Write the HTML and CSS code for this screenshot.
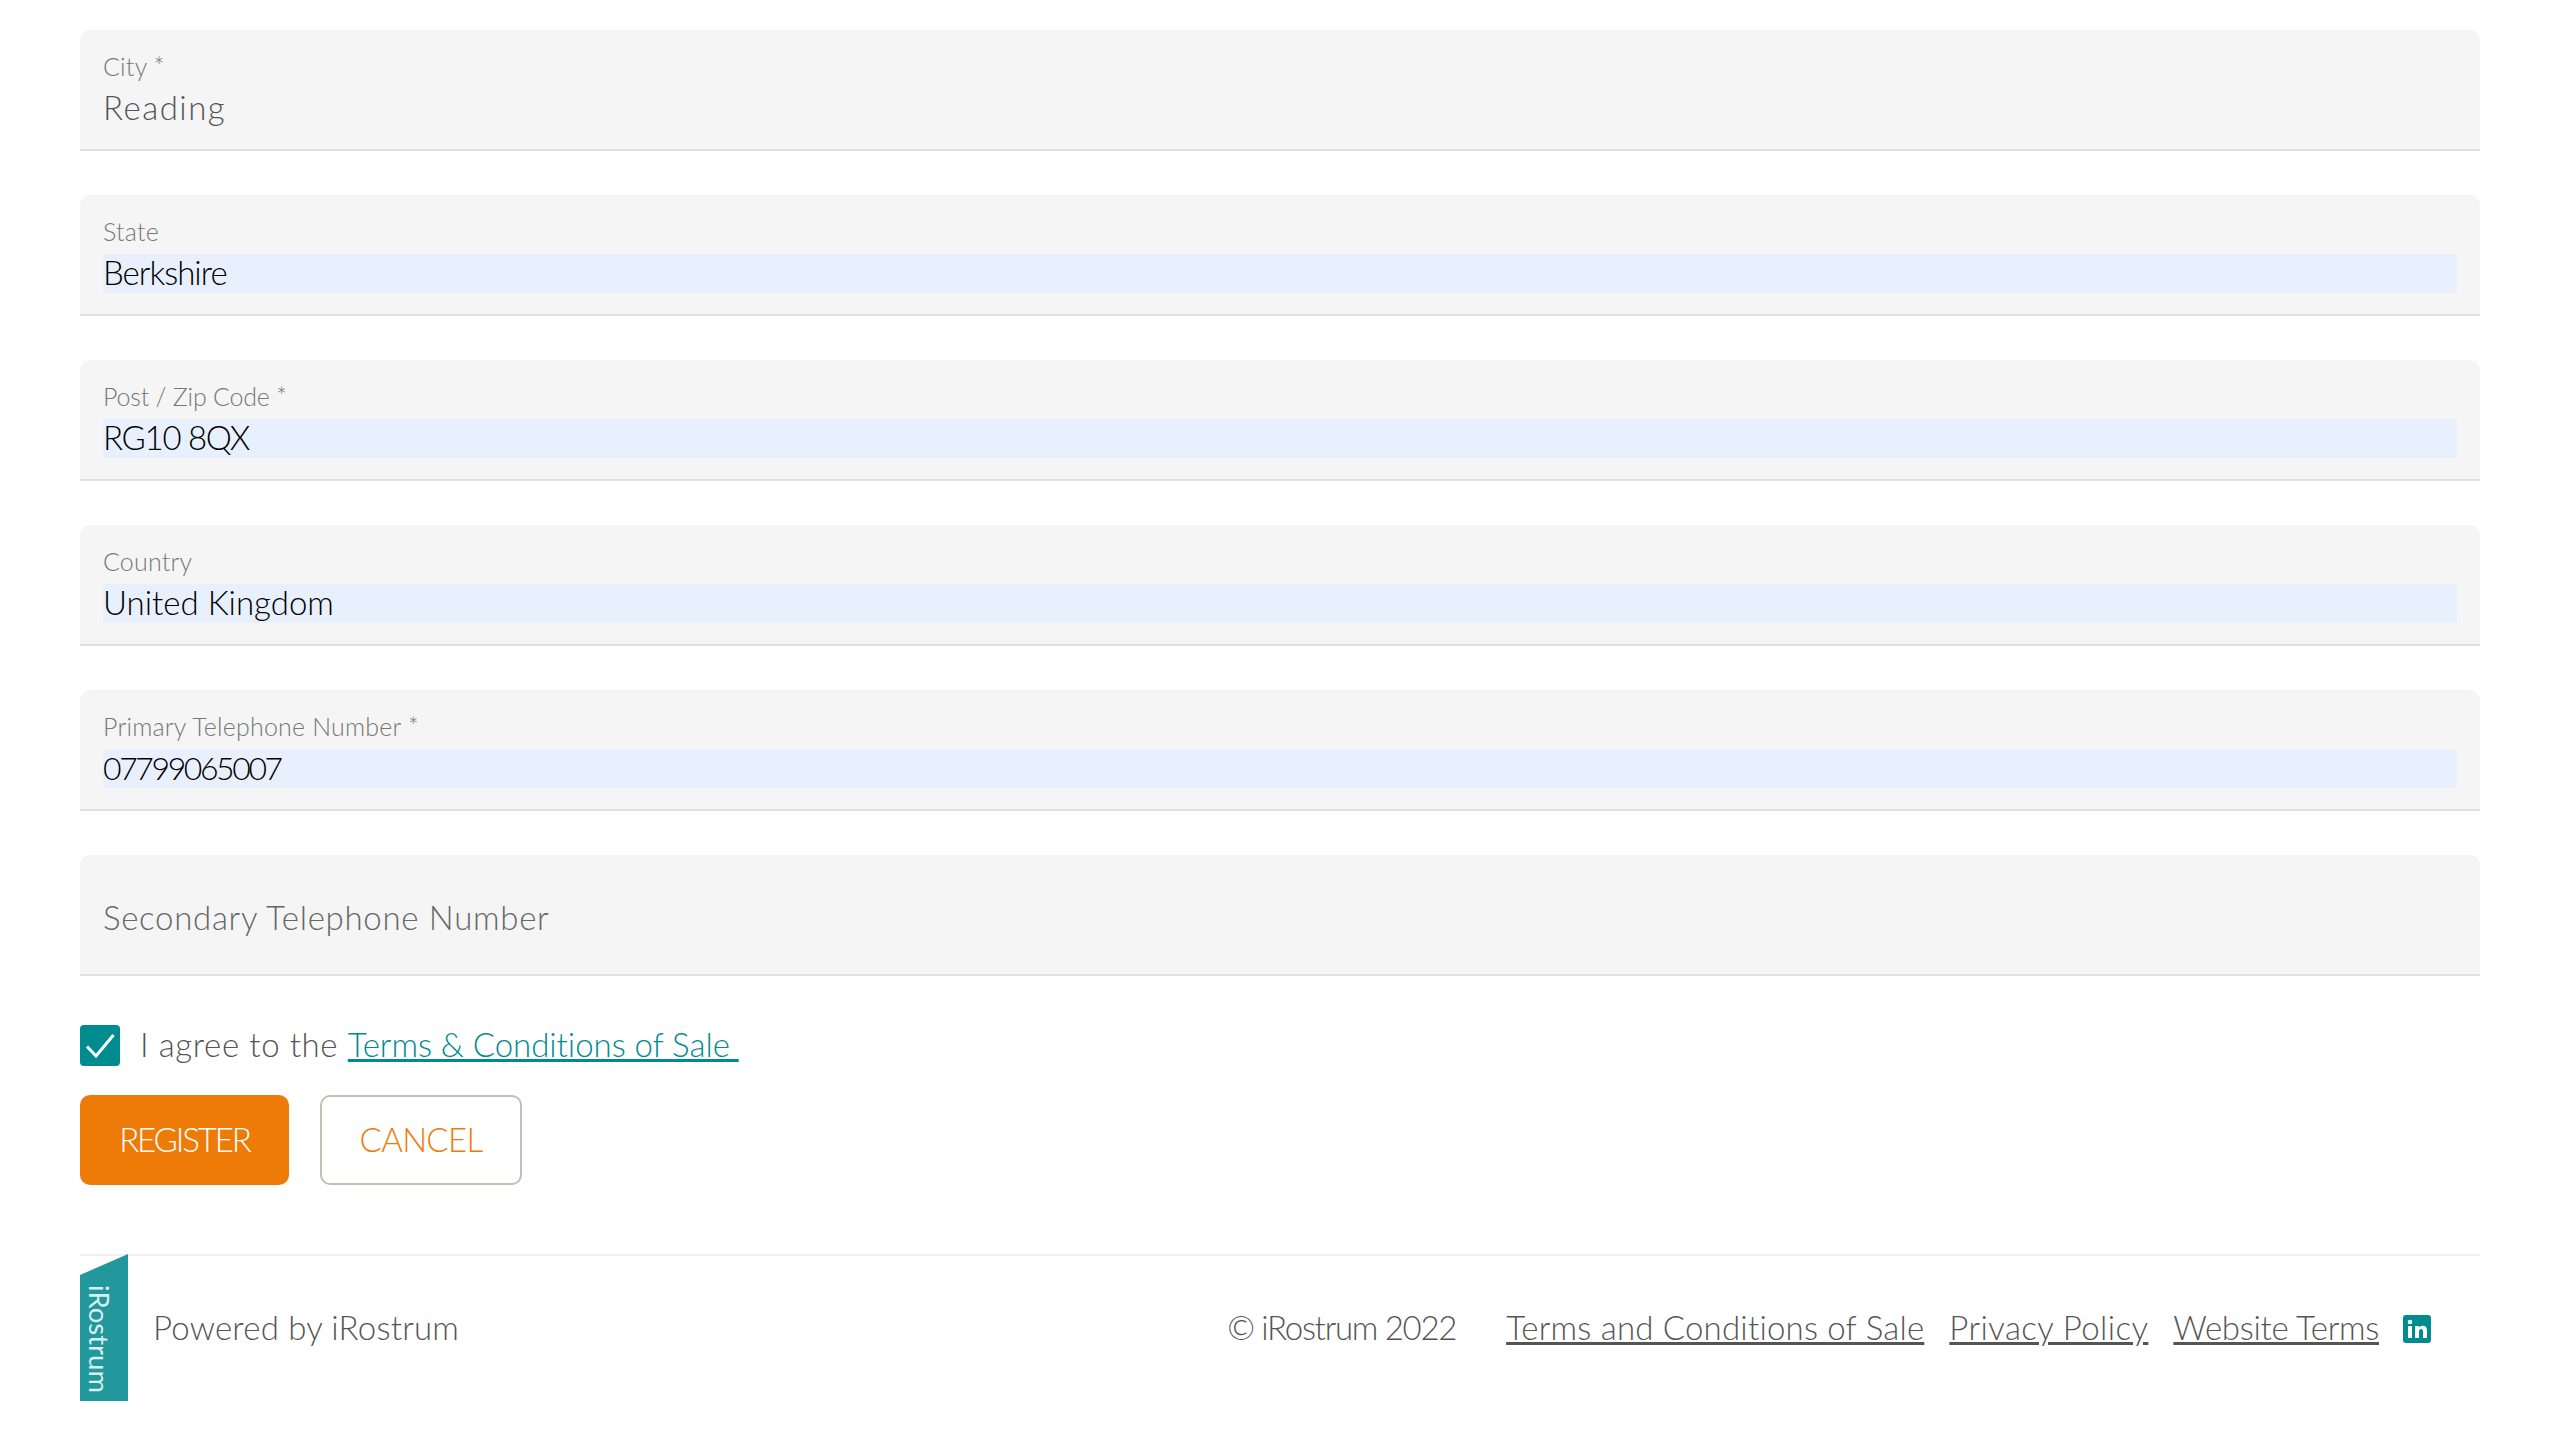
FILE: index.html
```html
<!DOCTYPE html>
<html lang="en">
<head>
<meta charset="utf-8">
<title>Register</title>
<link rel="stylesheet" href="styles.css">
</head>
<body>
<main class="page">
  <form class="form">
    <div class="field"><div class="label">City *</div><div class="value">Reading</div></div>
    <div class="field"><div class="label">State</div><div class="value filled">Berkshire</div></div>
    <div class="field"><div class="label zip">Post / Zip Code *</div><div class="value filled code">RG10 8QX</div></div>
    <div class="field"><div class="label">Country</div><div class="value filled country">United Kingdom</div></div>
    <div class="field"><div class="label">Primary Telephone Number *</div><div class="value filled phone">07799065007</div></div>
    <div class="field empty"><div class="placeholder">Secondary Telephone Number</div></div>
    <div class="agree">
      <span class="check"><svg viewBox="0 0 40 40" width="40" height="40"><path d="M7 21.5 L16 31 L33.5 10" fill="none" stroke="#fff" stroke-width="3"/></svg></span>
      <span class="agree-text">I agree to the <a class="terms" href="#">Terms &amp; Conditions of Sale&nbsp;</a></span>
    </div>
    <div class="actions">
      <button type="button" class="btn primary">REGISTER</button>
      <button type="button" class="btn secondary">CANCEL</button>
    </div>
  </form>
  <footer class="footer">
    <div class="brand">
      <svg class="logo" viewBox="0 0 48 147" width="48" height="147">
        <polygon points="0,21 48,0 48,147 0,147" fill="#23989c"/>
        <text class="logo-text" transform="translate(9,31) rotate(90)" textLength="108" lengthAdjust="spacingAndGlyphs">iRostrum</text>
      </svg>
      <span class="powered">Powered by iRostrum</span>
    </div>
    <div class="meta">
      <span class="copy">© iRostrum 2022</span>
      <a class="link first" href="#">Terms and Conditions of Sale</a>
      <a class="link privacy" href="#">Privacy Policy</a>
      <a class="link website" href="#">Website Terms</a>
      <svg class="linkedin" viewBox="0 0 28 28" width="28" height="28">
        <rect width="28" height="28" rx="3" fill="#008b8f"/>
        <rect x="5" y="11" width="4" height="12" fill="#fff"/>
        <circle cx="7" cy="7" r="2.3" fill="#fff"/>
        <path d="M12 11h3.8v1.8c.7-1.2 2-2.1 3.8-2.1 3.3 0 4.4 2 4.4 5.2V23h-4v-6.2c0-1.5-.4-2.7-1.9-2.7s-2.1 1.2-2.1 2.7V23h-4z" fill="#fff"/>
      </svg>
    </div>
  </footer>
</main>
</body>
</html>
```
FILE: styles.css
```css
* { box-sizing: border-box; }
html, body { margin: 0; padding: 0; background: #fff; }
body { font-family: "Lato", "Liberation Sans", sans-serif; color: #555; font-weight: 300; height: 1440px; overflow: hidden; }
.page { padding: 30px 80px 0; }
.form { display: flex; flex-direction: column; }
.field { height: 121px; margin-bottom: 44px; background: #f5f5f5; border-bottom: 2px solid #e0e0dc; border-radius: 10px 10px 0 0; padding: 23px 23px 0; display: flex; flex-direction: column; }
.field.empty { margin-bottom: 0; padding-top: 0; justify-content: center; }
.label { height: 36px; line-height: 26px; font-size: 25px; letter-spacing: 0.2px; color: #777; }
.label.zip { letter-spacing: -0.2px; }
.value { height: 39px; line-height: 37px; font-size: 33px; letter-spacing: 1.5px; color: #555; }
.value.filled { background: #e8f0fe; color: #000; letter-spacing: -1px; }
.value.code { letter-spacing: -1.3px; }
.value.country { letter-spacing: 0; }
.value.phone { font-size: 32px; letter-spacing: -2.4px; }
.placeholder { font-size: 33px; letter-spacing: 0.7px; color: #666; padding-top: 4px; }
.agree { display: flex; align-items: center; margin-top: 49px; height: 41px; font-size: 33px; letter-spacing: 0.6px; }
.agree-text { margin-top: -3px; }
.check { width: 40px; height: 41px; background: #008b8f; border-radius: 4px; margin-right: 20px; display: block; }
.check svg { display: block; }
.terms { color: #008b8f; text-decoration: underline; letter-spacing: -0.05px; }
.actions { display: flex; gap: 31px; margin-top: 29px; }
.btn { height: 90px; border-radius: 10px; font-family: inherit; font-weight: 300; font-size: 33px; padding: 0 0 2px; }
.primary { width: 209px; background: #ee7b08; border: 0; color: #fff; letter-spacing: -2.1px; }
.secondary { width: 202px; background: #fff; border: 2px solid #c4bfb3; color: #ee7b08; letter-spacing: -0.7px; }
.footer { display: flex; justify-content: space-between; align-items: center; margin-top: 69px; height: 147px; border-top: 2px solid #f0f0f0; font-size: 33px; letter-spacing: 0.2px; color: #555; }
.brand { display: flex; align-items: center; gap: 25px; margin-top: -2px; }
.powered { margin-top: -2px; }
.logo { display: block; }
.logo-text { font-size: 27px; fill: #d8efef; font-weight: 400; letter-spacing: 0; }
.meta { display: flex; align-items: center; padding-right: 49px; }
.copy { letter-spacing: -1.3px; margin-top: -4px; }
.link { color: #555; text-decoration: underline; margin-left: 25px; margin-top: -4px; }
.link.first { margin-left: 50px; letter-spacing: 0.2px; }
.privacy { letter-spacing: 0.4px; }
.website { letter-spacing: -0.3px; }
.linkedin { margin-left: 24px; display: block; }
```
